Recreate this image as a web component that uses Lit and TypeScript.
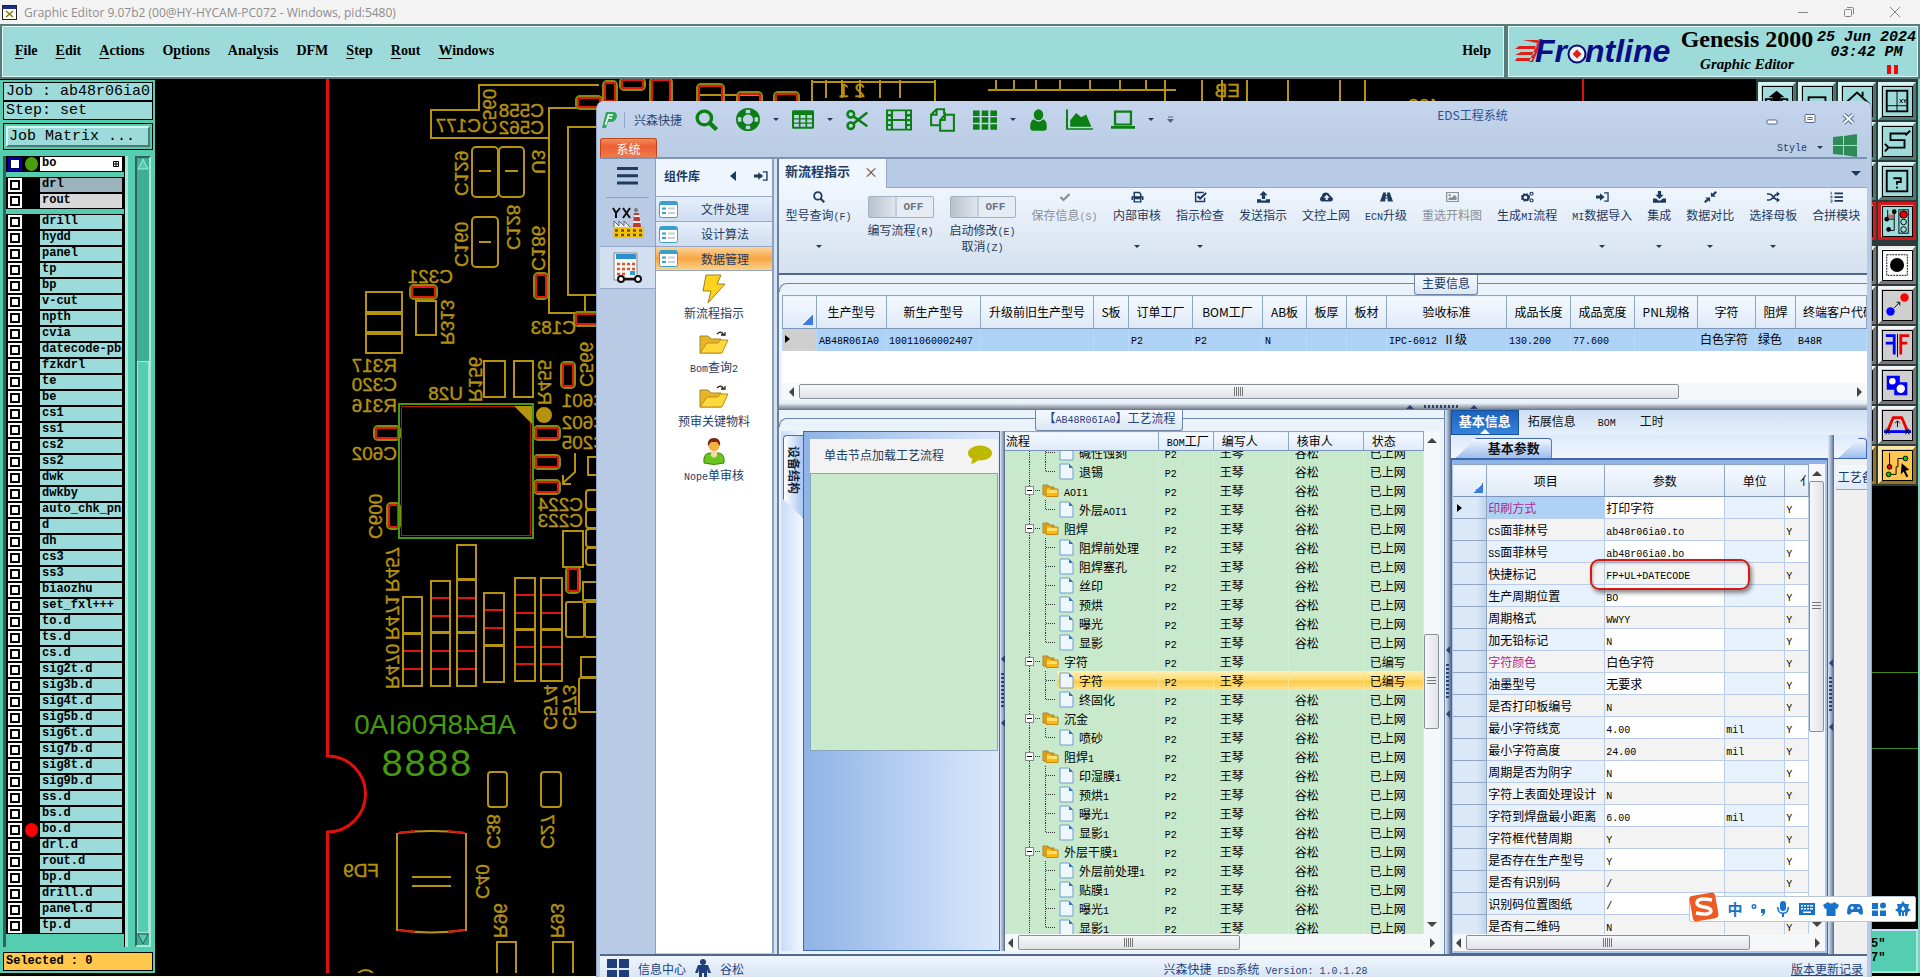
import { LitElement, html, svg, css, nothing } from "lit";
import { customElement } from "lit/decorators.js";
import { classMap } from "lit/directives/class-map.js";

/* Latin runs inside Chinese labels are set in a half-width monospace face. */
const mix = (s: string) =>
  s.split(/([\x20-\x7e]+)/).map((p) => (/^[\x20-\x7e]+$/.test(p) ? html`<span class="l">${p}</span>` : p));

const shared = css`
  * { box-sizing: border-box; }
  button { font: inherit; color: inherit; background: none; border: 0; padding: 0; margin: 0; cursor: default; }
  svg { display: block; flex: none; }
  .l { font-family: "Liberation Mono", monospace; font-size: 10px; line-height: 10px; white-space: pre; }
`;

/* ---------------------------------------------------------------- board */

const GOLD = "#b5930f";
const ht = (s: string, right: number, base: number) =>
  svg`<text transform="translate(${right} ${base}) scale(-1 1)">${s}</text>`;
const vt = (s: string, x: number, bottom: number) =>
  svg`<text transform="translate(${x} ${bottom}) scale(-1 1) rotate(-90)">${s}</text>`;
const rc = (x: number, y: number, x2: number, y2: number, r = 0) =>
  svg`<rect x=${x} y=${y} width=${x2 - x} height=${y2 - y} rx=${r}></rect>`;
const pill = (x: number, y: number, x2: number, y2: number) => svg`
  <rect x=${x} y=${y} width=${x2 - x} height=${y2 - y} rx="4" stroke="#8a8a10" stroke-width="2"></rect>
  <rect x=${x + 2} y=${y + 2} width=${x2 - x - 4} height=${y2 - y - 4} rx="2" stroke="#e01a10" stroke-width="2"></rect>`;

@customElement("pcb-board")
export class PcbBoard extends LitElement {
  static styles = [shared, css`
    :host { display: block; background: #000; overflow: hidden; }
    svg { width: 100%; height: 100%; }
    .silk { font: 19px "Liberation Sans", sans-serif; fill: #b5930f; stroke: #b5930f; stroke-width: .4px; }
    .part { font: 28px "Liberation Sans", sans-serif; fill: #459a0d; }
    .date { font: 38px "Liberation Mono", monospace; fill: #459a0d; }
  `];
  private bank(x: number, x2: number, tops: number[], reds: number[]) {
    return svg`${tops.slice(1).map((t, i) => rc(x, tops[i], x2, t - 1))}
      ${reds.map((r) => svg`<path d="M${x + 1} ${r}H${x2 - 1}" stroke="#d8180e" stroke-width="2"></path>`)}`;
  }
  render() {
    return html`<svg viewBox="155 79 1601 894" preserveAspectRatio="xMinYMin slice">
      <g fill="none" stroke="#e0100c" stroke-width="3">
        <path d="M327.500 79V756A38 38 0 0 1 327.500 832V973"></path>
        <path d="M1583 79V110" stroke-width="2"></path>
      </g>
      <g fill="none" stroke=${GOLD} stroke-width="2">
        <path d="M599 85H479V110H431V138H548M600 108H549V313H585M600 127H568V295H600M585 295V312M700 95H760M812 80V101M812 82H935M826 80V98M842 80V98M860 80V98M880 80V98M900 80V98M935 80V101M988 90H1176M996 80V90M1014 80V90M1036 80V90M1060 80V90M1090 80V90M1120 80V90M1146 80V90M1165 80V101M1202 80V101M1222 80V101M1247 80V101M1288 80V101M1340 80V101M1365 80V101"></path>
        ${rc(472, 147, 498, 197, 4)}${rc(499, 147, 524, 197, 4)}${rc(472, 217, 498, 267, 4)}
        <path d="M479 171H491M505 171H518M479 242H491"></path>
        ${rc(366, 292, 402, 312)}${rc(366, 314, 402, 332)}${rc(366, 334, 402, 353)}${rc(416, 301, 436, 335)}
        ${rc(484, 361, 505, 397)}${rc(514, 361, 533, 397)}
        <path d="M575 453V472L563 483M563 475V484H571"></path>
        ${this.bank(403, 422, [597, 634, 687], [651, 669])}
        ${this.bank(431, 450, [581, 633, 687], [598, 616, 651, 669])}
        ${this.bank(457, 476, [545, 580, 633, 687], [598, 616, 651, 669])}
        ${this.bank(484, 504, [593, 646, 683], [610, 628])}
        ${this.bank(515, 535, [578, 630, 682], [595, 613, 647, 664])}
        ${this.bank(541, 562, [578, 630, 682], [595, 613, 647, 664])}
        ${rc(563, 531, 583, 567)}${rc(566, 602, 584, 637, 2)}${rc(585, 602, 605, 637, 2)}${rc(583, 582, 605, 600)}
        ${rc(588, 457, 610, 475)}${rc(586, 490, 610, 509, 3)}${rc(586, 510, 610, 528, 3)}${rc(586, 529, 610, 547, 3)}${rc(586, 548, 610, 565, 3)}
        ${rc(581, 657, 605, 677)}${rc(579, 678, 605, 712, 2)}
        ${rc(488, 772, 507, 807, 3)}${rc(541, 772, 561, 807, 3)}
        <path d="M397 833V931M466 833V931M398 833Q431 829 465 833M398 930Q431 935 465 930M412 877H451M412 886H451"></path>
        <path d="M398 833L415 831M448 831L465 833M398 930L415 932M448 932L465 930" stroke="#d8180e"></path>
        ${rc(497, 942, 516, 985)}${rc(553, 942, 573, 985)}
        <path d="M358 973Q366 967 373 973"></path>
        ${pill(410, 285, 437, 299)}${pill(534, 273, 548, 299)}${pill(574, 312, 602, 326)}${pill(576, 96, 602, 109)}
        ${pill(603, 81, 617, 103)}${pill(620, 78, 645, 90)}${pill(650, 78, 672, 104)}${pill(697, 84, 724, 108)}${pill(737, 92, 762, 110)}${pill(774, 92, 799, 110)}
        ${pill(374, 426, 400, 440)}${pill(561, 362, 575, 388)}${pill(387, 503, 400, 529)}
        ${pill(534, 426, 560, 440)}${pill(534, 455, 560, 469)}${pill(534, 480, 560, 494)}${pill(566, 567, 580, 593)}
        <rect x="399" y="404" width="134" height="134" stroke="#459a0d"></rect>
        <rect x="401.500" y="406.500" width="129" height="129" stroke="#c01010" stroke-width="1"></rect>
      </g>
      <path d="M514 406H532V424Z" fill=${GOLD}></path><circle cx="544" cy="415" r="8" fill=${GOLD}></circle>
      <g class="silk">
        ${ht("C177", 481, 132)}${ht("C558", 544, 117)}${ht("C562", 544, 134)}${ht("C321", 453, 283)}${ht("C183", 576, 334)}
        ${ht("R317", 397, 372)}${ht("C320", 397, 391)}${ht("R316", 397, 412)}${ht("U28", 463, 400)}${ht("C602", 397, 460)}
        ${ht("C601", 607, 407)}${ht("C602", 607, 429)}${ht("C205", 607, 449)}${ht("C224", 583, 511)}${ht("C223", 583, 527)}${ht("FD9", 379, 877)}
        ${ht("2 1", 865, 97)}${ht("EB", 1240, 97)}
        ${ht("402", 1440, 112)}
        ${vt("C560", 483, 134)}${vt("C129", 455, 196)}${vt("U3", 532, 174)}${vt("C160", 455, 267)}${vt("C128", 507, 250)}${vt("C186", 532, 271)}
        ${vt("R313", 441, 345)}${vt("R156", 469, 402)}${vt("R455", 538, 405)}${vt("C566", 580, 387)}${vt("C600", 369, 539)}
        ${vt("R457", 386, 592)}${vt("R471", 386, 640)}${vt("R470", 386, 689)}${vt("C574", 544, 730)}${vt("C573", 563, 730)}
        ${vt("C38", 487, 849)}${vt("C27", 541, 849)}${vt("C40", 476, 899)}${vt("R96", 494, 938)}${vt("R93", 551, 938)}
      </g>
      <g class="part">${ht("AB48R06IA0", 516, 734)}</g>
      <g class="date">${ht("8888", 472, 776)}</g>
      <path d="M1756 671.500H1920M1756 747.500H1920" stroke="#3f8a10"></path>
    </svg>`;
  }
}

/* ---------------------------------------------------------------- icons */

const NAVY = "#1f3a5f";
const glyph: Record<string, unknown> = {
  search: svg`<circle cx="6.500" cy="6.500" r="5" fill="none" stroke="currentColor" stroke-width="2.400"></circle><path d="M10 10L15 15" stroke="currentColor" stroke-width="3"></path>`,
  ring: svg`<circle cx="8" cy="8" r="5.400" fill="none" stroke="currentColor" stroke-width="4"></circle><g fill="none" stroke="#bfd0e8" stroke-width="2.600"><path d="M6.500 2.300H9.500M6.500 13.700H9.500M2.300 6.500V9.500M13.700 6.500V9.500"></path></g><circle cx="8" cy="8" r="7.500" fill="none" stroke="currentColor"></circle>`,
  table: svg`<path fill-rule="evenodd" d="M1 1H15Q16 1 16 2V14Q16 15 15 15H1Q0 15 0 14V2Q0 1 1 1ZM1.500 4.500V7H5V4.500ZM6.200 4.500V7H9.800V4.500ZM11 4.500V7H14.500V4.500ZM1.500 8V10.300H5V8ZM6.200 8V10.300H9.800V8ZM11 8V10.300H14.500V8ZM1.500 11.300V13.600H5V11.300ZM6.200 11.300V13.600H9.800V11.300ZM11 11.300V13.600H14.500V11.300Z" fill="currentColor"></path>`,
  cut: svg`<g fill="none" stroke="currentColor" stroke-width="1.800"><circle cx="3.500" cy="3.800" r="2.400"></circle><circle cx="3.500" cy="12.200" r="2.400"></circle><path d="M5.500 5.500L15.500 12.500M5.500 10.500L15.500 2.500"></path></g>`,
  film: svg`<path fill-rule="evenodd" d="M0 1H16V15H0ZM1.200 2.200V4H3V2.200ZM1.200 5.600V7.400H3V5.600ZM1.200 8.800V10.600H3V8.800ZM1.200 12V13.800H3V12ZM13 2.200V4H14.800V2.200ZM13 5.600V7.400H14.800V5.600ZM13 8.800V10.600H14.800V8.800ZM13 12V13.800H14.800V12ZM4.300 2.200V7.300H11.700V2.200ZM4.300 8.700V13.800H11.700V8.700Z" fill="currentColor"></path>`,
  copy: svg`<g fill="none" stroke="currentColor" stroke-width="1.300"><path d="M6 11.500H.7V4.500L4.200.8H9V4M4.200.8V4.500H.7"></path><path d="M9.500 4.500H15.300V15.200H6.500V8L9.500 4.500V8H6.500"></path></g>`,
  grid: svg`<path d="M0 1H4.400V5H0ZM5.800 1H10.200V5H5.800ZM11.600 1H16V5H11.600ZM0 6H4.400V10H0ZM5.800 6H10.200V10H5.800ZM11.600 6H16V10H11.600ZM0 11H4.400V15H0ZM5.800 11H10.200V15H5.800ZM11.600 11H16V15H11.600Z" fill="currentColor"></path>`,
  user: svg`<circle cx="8" cy="4.200" r="4" fill="currentColor"></circle><path d="M4 7.500Q8 11 12 7.500Q15 8.500 15 13Q15 15.800 12.500 15.800H3.500Q1 15.800 1 13Q1 8.500 4 7.500Z" fill="currentColor"></path>`,
  chart: svg`<path d="M0 1H1.200V14H16V15.200H0Z" fill="currentColor"></path><path d="M2.500 13V8.500L6 3.500L9 6.500L12 4.500L15 13Z" fill="currentColor"></path>`,
  laptop: svg`<path d="M2.700 2.500H13.300V11.500H2.700Z" fill="none" stroke="currentColor" stroke-width="1.500"></path><path d="M0 12.500H16V14.500H0Z" fill="currentColor"></path>`,
  check: svg`<path d="M2 8L6 12L14 4" fill="none" stroke="currentColor" stroke-width="3"></path>`,
  print: svg`<path d="M4 7V2H10L12 4V7M1.500 12V8H14.500V12M4 10H12V14.500H4Z" fill="none" stroke="currentColor" stroke-width="1.800"></path>`,
  tick: svg`<path d="M12 2H2V14H13V9" fill="none" stroke="currentColor" stroke-width="1.800"></path><path d="M4.500 7L7.500 10L15 2.500" fill="none" stroke="currentColor" stroke-width="2.600"></path>`,
  upload: svg`<path d="M8 0L13 5.500H10V10.500H6V5.500H3ZM0 11H5V12.500H11V11H16V15.500H0Z" fill="currentColor"></path>`,
  download: svg`<path d="M6 0H10V5H13L8 10.500L3 5H6ZM0 10H4L6.500 12.500H9.500L12 10H16V15.500H0Z" fill="currentColor"></path>`,
  cloud: svg`<path fill-rule="evenodd" d="M4 14Q0 14 0 10.500Q0 8 2.200 7.200Q2.500 2 7.500 2Q11 2 12 5.500Q14 6 14 8Q16 8.500 16 11Q16 14 13 14ZM7 12H9.500V9H12L8.200 5L4.500 9H7Z" fill="currentColor"></path>`,
  road: svg`<path fill-rule="evenodd" d="M4 2H7.300L7 5H9L8.700 2H12L16 14H9.600L9.300 10H6.700L6.400 14H0ZM7 6.500L6.800 8.500H9.200L9 6.500Z" fill="currentColor"></path>`,
  image: svg`<path d="M.8 2H15.200V14H.8Z" fill="none" stroke="currentColor" stroke-width="1.500"></path><circle cx="4.500" cy="5.500" r="1.500" fill="currentColor"></circle><path d="M3 12V10L5.500 8L7 9L10.500 5L13 8V12Z" fill="currentColor"></path>`,
  gears: svg`<circle cx="5.500" cy="8.500" r="3.600" fill="none" stroke="currentColor" stroke-width="2.600"></circle><circle cx="5.500" cy="8.500" r="5" fill="none" stroke="currentColor" stroke-width="1.500" stroke-dasharray="2 2"></circle><circle cx="13" cy="3.500" r="1.900" fill="none" stroke="currentColor" stroke-width="1.400"></circle><circle cx="13" cy="12.500" r="1.900" fill="none" stroke="currentColor" stroke-width="1.400"></circle>`,
  signin: svg`<path d="M0 6H5V3L10.500 8L5 13V10H0Z" fill="currentColor"></path><path d="M10 2.500H14.800V13.500H10" fill="none" stroke="currentColor" stroke-width="1.600"></path>`,
  compress: svg`<path d="M8.500 1.500L10.500 3.500L14 0L16 2L12.500 5.500L14.500 7.500H8.500ZM7.500 14.500L5.500 12.500L2 16L0 14L3.500 10.500L1.500 8.500H7.500Z" fill="currentColor"></path>`,
  shuffle: svg`<path d="M0 4H3Q5 4 8 8T13 12M0 12H3Q5 12 8 8T13 4" fill="none" stroke="currentColor" stroke-width="2"></path><path d="M12 .8L16 4L12 7.200ZM12 8.800L16 12L12 15.200Z" fill="currentColor"></path>`,
  list: svg`<path d="M5.500 2H16V4.200H5.500ZM5.500 7H16V9.200H5.500ZM5.500 12H16V14.200H5.500Z" fill="currentColor"></path><path d="M1.500 1V5M.5 7H2.500V9H.5M.5 12H2.500V15H.5" fill="none" stroke="currentColor"></path>`,
};
const ico = (n: string, w: number, h = w) =>
  html`<svg width=${w} height=${h} viewBox="0 0 16 16" preserveAspectRatio="none">${glyph[n]}</svg>`;

const folderIcon = html`<svg width="17" height="15" viewBox="0 0 17 15"><path d="M1 2H6L7.500 4H12V12H1Z" fill="#d9a52a" stroke="#a9852c"></path><path d="M4 4H8L9.500 6H16V13.500H4Z" fill="#fdb813" stroke="#c38a12"></path><path d="M5 7H15V10H5Z" fill="#ffe067"></path></svg>`;
const fileIcon = html`<svg width="15" height="17" viewBox="0 0 15 17"><path d="M1 1H10L14 5V16H1Z" fill="#eef6ff" stroke="#6f9fce"></path><path d="M10 1L14 5H10Z" fill="#2c74c8"></path></svg>`;
const bigFolder = html`<svg width="30" height="24" viewBox="0 0 30 24"><path d="M1 5H9L12 8H22V22H1Z" fill="#e6b528" stroke="#a8851c"></path><path d="M1 22L8 12H19L21 9H29L23 22Z" fill="#ffd83c" stroke="#b8901a"></path><path d="M18 3Q22 -1 25 4M22 4H26V1" fill="none" stroke="#222" stroke-width="1.300"></path></svg>`;

/* ---------------------------------------------------------------- EDS window */

const mainCols: [string, number, string][] = [
  ["生产型号", 70, "AB48R06IA0"], ["新生产型号", 94, "10011060002407"], ["升级前旧生产型号", 113, ""], ["S板", 35, ""],
  ["订单工厂", 64, "P2"], ["BOM工厂", 70, "P2"], ["AB板", 44, "N"], ["板厚", 40, ""], ["板材", 40, ""],
  ["验收标准", 120, "IPC-6012 Ⅱ级"], ["成品长度", 64, "130.200"], ["成品宽度", 64, "77.600"], ["PNL规格", 63, ""],
  ["字符", 58, "白色字符"], ["阻焊", 40, "绿色"],
];

const tree: [string, boolean, string?][] = [
  ["碱性蚀刻", false], ["退锡", false], ["AOI1", true], ["外层AOI1", false], ["阻焊", true], ["阻焊前处理", false],
  ["阻焊塞孔", false], ["丝印", false], ["预烘", false], ["曝光", false], ["显影", false], ["字符", true, "已编写"],
  ["字符", false, "已编写"], ["终固化", false], ["沉金", true], ["喷砂", false], ["阻焊1", true], ["印湿膜1", false],
  ["预烘1", false], ["曝光1", false], ["显影1", false], ["外层干膜1", true], ["外层前处理1", false], ["贴膜1", false],
  ["曝光1", false], ["显影1", false],
];

const params: [string, string, string?][] = [
  ["印刷方式", "打印字符"], ["CS面菲林号", "ab48r06ia0.to"], ["SS面菲林号", "ab48r06ia0.bo"], ["快捷标记", "FP+UL+DATECODE"],
  ["生产周期位置", "BO"], ["周期格式", "WWYY"], ["加无铅标记", "N"], ["字符颜色", "白色字符"], ["油墨型号", "无要求"],
  ["是否打印板编号", "N"], ["最小字符线宽", "4.00", "mil"], ["最小字符高度", "24.00", "mil"], ["周期是否为阴字", "N"],
  ["字符上表面处理设计", "N"], ["字符到焊盘最小距离", "6.00", "mil"], ["字符框代替周期", "Y"], ["是否存在生产型号", "Y"],
  ["是否有识别码", "/"], ["识别码位置图纸", "/"], ["是否有二维码", "N"],
];

const ribbon: [string, string, boolean, string?][] = [
  ["print", "内部审核", true], ["tick", "指示检查", true], ["upload", "发送指示", false], ["cloud", "文控上网", false],
  ["road", "ECN升级", false], ["image", "重选开料图", false, "off"], ["gears", "生成MI流程", false], ["signin", "MI数据导入", true],
  ["download", "集成", true], ["compress", "数据对比", true], ["shuffle", "选择母板", true], ["list", "合拼模块", false],
];

@customElement("eds-window")
export class EdsWindow extends LitElement {
  static styles = [shared, css`
    :host { display: flex; flex-direction: column; font: 12px/16px "Noto Sans CJK SC", sans-serif; color: #1f3a5f;
      background: linear-gradient(#c4d4ec, #b9cbe4 60px, #b9cbe4); border-radius: 8px 8px 0 0; padding: 0 4px 0 3px;
      border-left: 1px solid #8fa5c4; border-right: 1px solid #8fa5c4; white-space: nowrap; overflow: hidden; }
    .title { display: flex; align-items: center; height: 37px; flex: none; padding-left: 1px; }
    .quick { display: flex; align-items: center; gap: 13px; color: #0a7f12; }
    .quick .name { color: #2c466e; border-left: 1px solid #91a6c6; padding-left: 9px; margin-left: -7px; }
    .quick .wide { margin-right: 5px; }
    .caret { border: 3px solid transparent; border-top: 3px solid #1f3a5f; border-bottom: 0; width: 6px; height: 3px; }
    .cap { flex: 1; text-align: center; padding: 0 0 10px 5px; color: #2d4f93; }
    .wb { display: flex; gap: 26px; padding: 0 12px 2px 0; align-items: center; }
    .sys { display: flex; height: 21px; flex: none; border-bottom: 2px solid #7d93b3; align-items: flex-end; justify-content: space-between; }
    .sys .tab { width: 57px; height: 19px; border-radius: 3px 3px 0 0; color: #fff; border: 1px solid #c14418; border-bottom: 0;
      background: linear-gradient(#f28d5a, #ec5f35 40%, #f07a4c); line-height: 17px; }
    .style { display: flex; align-items: center; gap: 10px; padding-right: 10px; height: 20px; }
    .style .l { padding-top: 4px; }
    .style svg { margin-top: -3px; }
    .body { display: flex; flex: 1; min-height: 0; }
    .nav { width: 56px; border-right: 1px solid #8ba1c2; display: flex; flex-direction: column; align-items: center; }
    .nav .menu { height: 39px; padding: 8px 0 0; width: 43px; border-bottom: 1px solid #8ba1c2; display: flex; justify-content: center; }
    .nav .item { height: 48px; width: 100%; display: grid; place-items: center; }
    .nav .on { height: 43px; background: #d2dff0; border: solid #93a8c6; border-width: 1px 0; }
    .lib { width: 118px; background: #fff; border-right: 2px solid #8ba1c2; display: flex; flex-direction: column; margin-bottom: 1px; }
    .lib header { height: 37px; background: #eef5fd; display: flex; align-items: center; padding: 0 4px 0 8px; font-weight: bold; flex: none; }
    .lib header span { flex: 1; padding-bottom: 3px; }
    .lib header svg { margin: 0 0 4px 18px; }
    .acc { height: 25px; border: 1px solid #93a8c6; border-width: 1px 0 0; display: flex; align-items: center; padding-left: 3px;
      background: linear-gradient(#e6f0fb, #cfddf0); }
    .acc span { flex: 1; text-align: center; }
    .acc.sel { background: linear-gradient(#fbd49a, #f8a545 50%, #fdd287); border-bottom-width: 1px; }
    .tools { display: flex; flex-direction: column; align-items: center; padding-top: 2px; }
    .tools button { height: 54px; display: flex; flex-direction: column; align-items: center; }
    .tools .pic { height: 32px; display: grid; place-items: center; }
    .gutter { width: 5px; border-right: 2px solid #6a7f9e; background: #d5e2f2; }
    .main { flex: 1; min-width: 0; display: flex; flex-direction: column; background: #e4eefa; }
    .docs { height: 29px; flex: none; display: flex; background: #b9cbe4; border-bottom: 1px solid #93a8c6; align-items: center; justify-content: space-between; padding-right: 6px; }
    .docs .tab { height: 29px; align-self: flex-start; background: #f0f6fd; border-right: 1px solid #93a8c6; display: flex; align-items: center; gap: 14px; padding: 0 8px 6px 6px; font-size: 13px; font-weight: bold; }
    .docs .x { font-weight: normal; font-size: 14px; color: #555; }
    .big { border-width: 5px; border-bottom-width: 0; width: 10px; height: 5px; border-top-width: 5px; }
    .ribbon { height: 87px; flex: none; display: flex; gap: 15px; padding: 3px 6px; background: linear-gradient(#eef5fd, #d5e1ef); border-bottom: 2px solid #53688a; align-items: flex-start; overflow: hidden; }
    .ribbon > * { display: flex; flex-direction: column; align-items: center; }
    .ribbon .w { width: 67px; }
    .ribbon svg { margin-bottom: 4px; }
    .ribbon .caret { margin-top: 22px; }
    .off { color: #8b8f96; }
    .sw { appearance: none; margin: 5px 0 0; width: 66px; height: 22px; border: 1px solid #a3b0c2; border-radius: 2px;
      background: linear-gradient(90deg, #b9c1ca, #dfe5ec 26px, #a3b0c2 27px, #e6ecf3 28px); }
    .swb { display: grid; }
    .swb > * { grid-area: 1 / 1; }
    .swb b { align-self: center; padding: 4px 0 0 36px; font: bold 11px "Liberation Mono", monospace; color: #687484; pointer-events: none; }
    .ribbon label { display: flex; flex-direction: column; align-items: center; gap: 4px; }
    .group { position: relative; background: #eaf3fc; padding: 20px 0 3px 3px; flex: none; height: 128px; display: flex; flex-direction: column; }
    .group::before { content: ""; position: absolute; inset: 8px 0 auto 0; height: 8px; border: solid #6f86a6; border-width: 1px 0 0 1px; border-radius: 8px 0 0 0; }
    .legend { position: absolute; top: 0; left: 50%; border: 1px solid #6f86a6; border-top: 0; border-radius: 0 0 3px 3px;
      background: linear-gradient(#f6faff, #dbe7f5); padding: 0 7px 4px; height: 20px; line-height: 15px; }
    .legend.a { margin-left: 91px; }
    .legend.b { margin-left: -76px; color: #26437e; height: 21px; line-height: 16px; }
    table { border-collapse: collapse; table-layout: fixed; width: 100%; color: #000; }
    th { font-weight: normal; border: 1px solid #8fa5c4; border-bottom-color: #7d95b8; background: linear-gradient(#f4f9ff, #dfeaf7); padding: 0; overflow: hidden; }
    td { padding: 0 0 0 2px; overflow: hidden; }
    .info { background: #fff; flex: 1; overflow: hidden; }
    .info th { height: 33px; border-top-color: #8fa5c4; }
    .info td { height: 22px; background: #aed2f6; border: 1px solid #b9d9f8; border-width: 0 1px; line-height: 16px; padding-bottom: 2px; }
    .info .last { text-align: left; padding-left: 7px; }
    td.rowh { background: #cfcfcf !important; }
    .corner::after { content: ""; display: block; margin: 15px 3px 0 auto; width: 10px; height: 10px; background: linear-gradient(135deg, transparent 50%, #3d7be0 50%); }
    .hs { height: 17px; flex: none; display: flex; align-items: center; background: #f6f7f9; gap: 5px; padding: 0 5px 0 7px; }
    .hs i, .vs i { background: linear-gradient(#f7f8fa, #dfe2e8); border: 1px solid #8b9098; border-radius: 2px; display: grid; place-items: center; }
    .hs i { height: 15px; }
    .hs i::after { content: ""; width: 9px; height: 9px; background: repeating-linear-gradient(90deg, #777 0 1px, transparent 1px 2px); }
    .low .hs { padding-left: 3px; }
    .vs { width: 16px; flex: none; display: flex; flex-direction: column; align-items: center; background: #f6f7f9; padding: 7px 0; }
    .vs i { width: 15px; background: linear-gradient(90deg, #f7f8fa, #dfe2e8); }
    .vs i::after { content: ""; width: 9px; height: 9px; background: repeating-linear-gradient(#777 0 1px, transparent 1px 3px); }
    .grow { flex: 1; }
    .ar { width: 0; height: 0; border: 5px solid transparent; flex: none; }
    .ar.lft { border-right-color: #444; border-left: 0; }
    .ar.rgt { border-left-color: #444; border-right: 0; }
    .ar.up { border-bottom-color: #444; border-top: 0; }
    .ar.dn { border-top-color: #444; border-bottom: 0; }
    .split { flex: none; height: 7px; background: linear-gradient(#f0f4f8, #b8bec8 40%, #66758a); display: flex; justify-content: center; align-items: center; gap: 10px; padding-left: 238px; }
    .split .dots { width: 36px; height: 3px; background: repeating-linear-gradient(90deg, #2b4370 0 2px, transparent 2px 4px); }
    .vsplit { flex: none; background: linear-gradient(90deg, #dfe8f4, #9fb0c8 50%, #54698c); display: flex; flex-direction: column; align-items: center; justify-content: center; gap: 10px; }
    .vsplit .dots { height: 36px; width: 3px; background: repeating-linear-gradient(#2b4370 0 2px, transparent 2px 4px); }
    .ar.s { border-width: 4px; }
    .ar.up.s { border-bottom-color: #2b4370; border-top: 0; }
    .ar.lft.s { border-right-color: #2b4370; border-left: 0; }
    .low { flex: 1; min-height: 0; display: grid; grid-template-columns: minmax(0, 8fr) 6px minmax(0, 5fr); grid-template-rows: minmax(0, 1fr); }
    .low .group { height: auto; min-height: 0; flex-direction: row; padding: 21px 4px 3px 2px; border-right: 1px solid #6f86a6; }
    .dev { width: 219px; display: flex; flex: none; }
    .dev .side { width: 22px; background: linear-gradient(90deg, #c9dcfa, #f2f7ff); padding: 4px 0 0 2px; }
    .dev .side button { width: 20px; height: 83px; writing-mode: vertical-rl; text-orientation: sideways; font-weight: bold; color: #16263f;
      background: linear-gradient(90deg, #fff, #a9c5f0); border: 1px solid #4a6ea8; border-right: 0; border-radius: 4px 0 0 0; padding: 10px 0 0; text-align: left;
      clip-path: polygon(0 0, 100% 0, 100% 100%, 0 77%); font-size: 12px; }
    .dev .pane { flex: 1; border: 1px solid #3e68ae; background: linear-gradient(90deg, #8fb3e6, #dbe8fc); padding: 7px 1px 0 6px; }
    .hint { height: 34px; background: #f3f3f3; display: flex; align-items: center; justify-content: space-between; padding: 0 6px 3px 14px; }
    .map { height: 278px; background: #c9e9cc; border: 1px solid #8aa6b8; }
    .flow { flex: 1; min-width: 0; display: flex; flex-direction: column; background: #f6f7f9; }
    .cols { display: flex; flex: 1; min-height: 0; }
    .view { flex: 1; min-width: 0; overflow: hidden; display: flex; flex-direction: column; }
    .tree th { height: 19px; text-align: left; padding-left: 8px; border-width: 1px 1px 1px 0; line-height: 16px; }
    .tree th:first-child { padding-left: 1px; }
    .rows { background: #c9e9cc; overflow: hidden; flex: 1; min-height: 0; }
    .rows table { margin-top: -8px; }
    .rows td { height: 19px; padding: 0 0 0 6px; border-right: 1px solid #d5ecd6; line-height: 17px; }
    .rows td:first-child { padding: 0; }
    .node { display: flex; align-items: center; height: 19px; }
    .node > span { padding-left: 5px; }
    .pick td { background: linear-gradient(#fff0b8, #fddc72 45%, #fbcb45 55%, #fee49a); border-color: #fbe29a; }
    .pick td:first-child { background: linear-gradient(90deg, #c9e9cc 52px, transparent 52px), linear-gradient(#fff0b8, #fddc72 45%, #fbcb45 55%, #fee49a); }
    .right { display: flex; flex-direction: column; min-width: 0; min-height: 0; overflow: hidden; }
    .tabs { height: 25px; flex: none; display: flex; background: linear-gradient(#cfe0f4, #e6f0fb); color: #111; gap: 1px; }
    .tabs button { padding: 0 8px 4px; position: relative; min-width: 44px; }
    .tabs .on { background: linear-gradient(#1c62bd, #3583dc); color: #fff; font: bold 13px/16px "Noto Sans CJK SC", sans-serif; border: 1px solid #174f9c; padding: 0 7px 4px; }
    .tabs .on::after { content: ""; position: absolute; left: 28px; bottom: 0; border: 5px solid transparent; border-bottom: 5px solid #fff; border-top: 0; }
    .halves { flex: 1; display: flex; min-height: 0; }
    .half { width: 377px; flex: none; display: flex; flex-direction: column; min-height: 0; }
    .half.rest { width: auto; flex: 1; min-width: 0; background: #f0f0f0; overflow: hidden; }
    .sub { height: 24px; flex: none; background: linear-gradient(#dce9fc, #f2f7ff); border-bottom: 1px solid #3e68ae; display: flex; align-items: flex-end; padding-left: 5px; }
    .sub button { height: 20px; width: 96px; background: linear-gradient(#f2f7ff, #9dbdec); font: bold 13px/18px "Noto Sans CJK SC", sans-serif; color: #111; padding: 0 0 2px 20px; clip-path: polygon(20px 0, 100% 0, 100% 100%, 0 100%);
      border: 1px solid #3e68ae; border-bottom: 0; border-radius: 0 4px 0 0; }
    .frame { flex: 1; min-height: 0; border: 3px solid #a9c5ee; border-top: 5px solid #8fb3e6; border-left-width: 2px; display: flex; flex-direction: column; background: #f6f7f9; outline: 1px solid #3e68ae; outline-offset: -1px; }
    .par th { height: 32px; border-width: 1px 1px 1px 0; }
    .par td { height: 22px; border: 1px solid #b9cdea; border-width: 0 1px 1px 0; background: #fff; line-height: 16px; padding-left: 1px; }
    .par tr:nth-child(even) td { background: #f3f3f3; }
    .par tr td.rh, .par tr:nth-child(even) td.rh { background: linear-gradient(90deg, #dbe8f7 70%, #c2d4ea); border-color: #8fa5c4; padding-left: 4px; }
    .par tr:nth-child(odd) td.k { background: #e8f2fd; }
    .par tr:nth-child(1) td.sel { background: #aed2f6; }
    .par .mag { color: #b3278f; }
    .note { height: 25px; flex: none; background: linear-gradient(#f4f9ff, #dfeaf7); border-bottom: 1px solid #8fa5c4; margin: 6px 0 0 2px; padding: 4px 2px; overflow: hidden; }
    .status { height: 23px; flex: none; border-top: 2px solid #53688a; background: linear-gradient(#eef5fd, #d9e6f4); display: flex; align-items: center; color: #26437e; overflow: hidden; }
    .status .l1 { display: flex; gap: 9px; align-items: center; padding: 4px 0 0 7px; }
    .status .mid { padding-top: 4px; flex: 1; text-align: center; }
    .status .r { padding: 4px 4px 0; }
    .status a { color: inherit; }
  `];

  private hscroll(w: string) {
    return html`<div class="hs"><span class="ar lft"></span><i style="width:${w}"></i><span class="grow"></span><span class="ar rgt"></span></div>`;
  }
  private branch(folder: boolean, last: boolean) {
    const dots = (d: string) => svg`<path d=${d} stroke="#333" stroke-dasharray="1 1"></path>`;
    return folder
      ? html`<svg width="37" height="19">${dots("M24.500 0V19M30 9.500H35")}<rect x="20.500" y="5.500" width="8" height="8" fill="#fff" stroke="#888"></rect><path d="M22 9.500H27" stroke="#000"></path></svg>${folderIcon}`
      : html`<svg width="54" height="19">${dots("M24.500 0V19")}${dots(last ? "M40.500 0V10" : "M40.500 0V19")}${dots("M41 9.500H51")}</svg>${fileIcon}`;
  }

  render() {
    const q = (n: string, w: number, h: number, wide = true) =>
      html`<button class=${classMap({ wide })} aria-label=${n}>${ico(n, w, h)}</button>`;
    const caret = html`<span class="caret"></span>`;
    return html`
      <div class="title">
        <div class="quick">
          <svg width="17" height="18" viewBox="0 0 17 18"><path d="M5 1H13Q17 2 15.500 7Q14 11 10 11H7L5 17H1Z" fill="#2fa65c"></path><path d="M7 4H12M6.500 7H11M7.500 4L4.500 14" stroke="#fff" stroke-width="1.600"></path></svg>
          <span class="name">兴森快捷</span>
          ${q("search", 23, 22)}${q("ring", 24, 23, false)}${caret}${q("table", 22, 21, false)}${caret}${q("cut", 22, 22)}${q("film", 26, 24)}
          ${q("copy", 25, 24)}${q("grid", 24, 22, false)}${caret}${q("user", 19, 22)}${q("chart", 27, 23)}${q("laptop", 24, 23, false)}${caret}
          <svg width="7" height="8" viewBox="0 0 7 8"><path d="M1 1H6" stroke="#567"></path><path d="M0 3H7L3.500 7Z" fill="#567"></path></svg>
        </div>
        <div class="cap">EDS工程系统</div>
        <div class="wb">
          <button aria-label="最小化"><svg width="12" height="12"><rect x="1" y="7" width="10" height="4" rx="1" fill="#fff" stroke="#53688a"></rect></svg></button>
          <button aria-label="最大化"><svg width="12" height="12"><rect x="1" y="1.500" width="10" height="8" rx="1" fill="#fff" stroke="#53688a"></rect><rect x="4" y="4.500" width="4" height="2" fill="none" stroke="#53688a"></rect></svg></button>
          <button aria-label="关闭"><svg width="13" height="12"><path d="M2 1.500L11 10M11 1.500L2 10" stroke="#53688a" stroke-width="4"></path><path d="M2 1.500L11 10M11 1.500L2 10" stroke="#fff" stroke-width="2"></path></svg></button>
        </div>
      </div>
      <div class="sys">
        <button class="tab">系统</button>
        <div class="style"><span class="l">Style</span>${caret}
          <svg width="24" height="23" viewBox="0 0 24 23"><path d="M0 3L10 2V11H0ZM11 2L24 0V11H11ZM0 12H10V21L0 20ZM11 12H24V23L11 21Z" fill="#2e8b57"></path></svg></div>
      </div>
      <div class="body">
        <nav class="nav">
          <button class="menu" aria-label="菜单"><svg width="21" height="18"><path d="M0 1.500H21M0 8.800H21M0 16H21" stroke=${NAVY} stroke-width="3"></path></svg></button>
          <button class="item" aria-label="工厂"><svg width="32" height="31" viewBox="0 0 32 31"><path d="M1 1L4 6V11M8 1L4 6M11 1L18 11M18 1L11 11" fill="none" stroke="#111" stroke-width="2"></path><path d="M21 20L22 6H27L29 20Z" fill="#c0392b"></path><path d="M22 9H28M21 15H29" stroke="#eee" stroke-width="2"></path><circle cx="24" cy="3" r="2" fill="#777"></circle><path d="M2 20V14L7 19V14L12 19V14L18 20" fill="#f4f4f4" stroke="#666"></path><path d="M1 20H32V31H1Z" fill="#f3c50a"></path><path d="M3 23.500H31M3 28H31" stroke="#6b5200" stroke-width="2.500" stroke-dasharray="3 3"></path></svg></button>
          <button class="item on" aria-label="日历"><svg width="30" height="32" viewBox="0 0 30 32"><path d="M1 1H24V28H1Z" fill="#f7f7f7" stroke="#888"></path><path d="M3 2H23V7H3Z" fill="#2a8fd0"></path><path d="M4 12H22M4 17H22M4 22H14" stroke="#e0552c" stroke-width="2.500" stroke-dasharray="3 2"></path><path d="M17 19H22V23H17Z" fill="#2aa0d8"></path><circle cx="8" cy="27" r="3" fill="#fff" stroke="#111" stroke-width="2"></circle><circle cx="25" cy="27" r="3" fill="#fff" stroke="#111" stroke-width="2"></circle><path d="M11 27H22" stroke="#111" stroke-width="2.500"></path></svg></button>
        </nav>
        <aside class="lib">
          <header><span>组件库</span><svg width="6" height="10"><path d="M6 0V10L0 5Z" fill=${NAVY}></path></svg>${ico("signin", 14, 12)}</header>
          ${["文件处理", "设计算法", "数据管理"].map((n, i) => html`<button class=${classMap({ acc: true, sel: i === 2 })}>
            <svg width="19" height="17" viewBox="0 0 19 17"><rect x=".5" y=".5" width="18" height="16" rx="2" fill="#fff" stroke="#3ba0c8"></rect><path d="M1 2.500H18" stroke="#3ba0c8" stroke-width="3"></path><path d="M3 7.500H7M3 12H7" stroke="#3ba0c8" stroke-width="2"></path><path d="M9 7.500H16M9 12H16" stroke="#ccd" stroke-width="2"></path></svg><span>${n}</span></button>`)}
          <div class="tools">
            <button><span class="pic"><svg width="24" height="30" viewBox="0 0 24 30"><path d="M4 1H19L15 10H23L6 29L9 17H1Z" fill="#ffd21c" stroke="#9a8020"></path></svg></span><span>新流程指示</span></button>
            <button><span class="pic">${bigFolder}</span><span>${mix("Bom")}查询${mix("2")}</span></button>
            <button><span class="pic">${bigFolder}</span><span>预审关键物料</span></button>
            <button><span class="pic"><svg width="22" height="28" viewBox="0 0 22 28"><path d="M1 26Q0 17 6 16H16Q22 17 21 26Q11 29 1 26Z" fill="#6cc51e" stroke="#3c8a10"></path><path d="M8 14H14V19L11 21L8 19Z" fill="#f5d9a8"></path><circle cx="11" cy="8.500" r="5.500" fill="#f2b040"></circle><path d="M5 9Q4 1 11 1T17 9L14 5H8Z" fill="#7a2410"></path></svg></span><span>${mix("Nope单审核")}</span></button>
          </div>
        </aside>
        <div class="gutter"></div>
        <section class="main">
          <div class="docs"><button class="tab">新流程指示<span class="x">×</span></button><span class="caret big"></span></div>
          <div class="ribbon">
            <button class="w">${ico("search", 12)}<span>${mix("型号查询(F)")}</span>${caret}</button>
            <div class="w"><label><span class="swb"><input class="sw" type="checkbox" /><b>OFF</b></span><span>${mix("编写流程(R)")}</span></label></div>
            <div class="w"><label><span class="swb"><input class="sw" type="checkbox" /><b>OFF</b></span><span>${mix("启动修改(E)")}</span></label><span>${mix("取消(Z)")}</span></div>
            <button class="w off">${ico("check", 12)}<span>${mix("保存信息(S)")}</span></button>
            ${ribbon.map(([i, n, c, o]) => html`<button class=${o ?? ""}>${ico(i, 13, 12)}<span>${mix(n)}</span>${c ? caret : nothing}</button>`)}
          </div>
          <div class="group">
            <div class="legend a">主要信息</div>
            <div class="info"><table>
              <colgroup><col style="width:34px" />${mainCols.map((c) => html`<col style="width:${c[1]}px" />`)}<col /></colgroup>
              <thead><tr><th class="corner"></th>${mainCols.map((c) => html`<th>${c[0]}</th>`)}<th class="last">终端客户代码</th></tr></thead>
              <tbody><tr><td class="rowh"><svg width="5" height="8"><path d="M0 0L5 4L0 8Z"></path></svg></td>${mainCols.map((c) => html`<td>${mix(c[2])}</td>`)}<td>${mix("B48R")}</td></tr></tbody>
            </table></div>
            ${this.hscroll("82%")}
          </div>
          <div class="split"><span class="ar up s"></span><span class="dots"></span><span class="ar up s"></span></div>
          <div class="low">
            <div class="group">
              <div class="legend b">${mix("【AB48R06IA0】工艺流程")}</div>
              <div class="dev">
                <div class="side"><button>设备结构</button></div>
                <div class="pane">
                  <div class="hint">单击节点加载工艺流程<svg width="24" height="20" viewBox="0 0 24 20"><ellipse cx="12" cy="8" rx="12" ry="7.500" fill="#bdb900"></ellipse><path d="M5 12L3 19Q8 18 11 14Z" fill="#bdb900"></path></svg></div>
                  <div class="map"></div>
                </div>
              </div>
              <div class="vsplit" style="width:5px"><span class="ar lft s"></span><span class="dots"></span><span class="ar lft s"></span></div>
              <div class="flow">
                <div class="cols">
                  <div class="view">
                    <table class="tree"><colgroup><col /><col style="width:55px" /><col style="width:75px" /><col style="width:75px" /><col style="width:60px" /></colgroup>
                      <thead><tr><th>流程</th><th>${mix("BOM工厂")}</th><th>编写人</th><th>核审人</th><th>状态</th></tr></thead></table>
                    <div class="rows"><table><colgroup><col /><col style="width:55px" /><col style="width:75px" /><col style="width:75px" /><col style="width:60px" /></colgroup>
                      <tbody>${tree.map(([n, f, s], i) => html`<tr class=${i === 12 ? "pick" : ""}>
                        <td><div class="node">${this.branch(f, i === tree.length - 1 || !!tree[i + 1]?.[1])}<span>${mix(n)}</span></div></td>
                        <td>${mix("P2")}</td><td>王琴</td><td>${s ? "" : "谷松"}</td><td>${s ?? "已上网"}</td></tr>`)}</tbody></table></div>
                  </div>
                  <div class="vs"><span class="ar up"></span><span style="flex:189"></span><i style="flex:93"></i><span style="flex:191"></span><span class="ar dn"></span></div>
                </div>
                ${this.hscroll("52%")}
              </div>
            </div>
            <div class="vsplit"><span class="ar lft s"></span><span class="dots"></span><span class="ar lft s"></span></div>
            <div class="right">
              <div class="tabs"><button class="on">基本信息</button><button>拓展信息</button><button>${mix("BOM")}</button><button>工时</button></div>
              <div class="halves">
                <div class="half">
                  <div class="sub"><button>基本参数</button></div>
                  <div class="frame">
                    <div class="cols">
                      <div class="view"><table class="par"><colgroup><col style="width:34px" /><col style="width:118px" /><col style="width:120px" /><col style="width:60px" /><col /></colgroup>
                        <thead><tr><th class="corner"></th><th>项目</th><th>参数</th><th>单位</th><th>　 亻</th></tr></thead>
                        <tbody>${params.map(([k, v, u], i) => html`<tr>
                          <td class="rh">${i ? nothing : html`<svg width="5" height="8"><path d="M0 0L5 4L0 8Z"></path></svg>`}</td>
                          <td class=${classMap({ k: true, sel: i === 0, mag: i === 0 || i === 7 })}>${mix(k)}</td>
                          <td>${mix(v)}</td><td class="k">${mix(u ?? "")}</td><td>${mix("Y")}</td></tr>`)}</tbody></table></div>
                      <div class="vs"><span class="ar up"></span><span style="flex:5"></span><i style="flex:250"></i><span style="flex:190"></span><span class="ar dn"></span></div>
                    </div>
                    ${this.hscroll("78%")}
                  </div>
                </div>
                <div class="vsplit" style="width:6px"><span class="ar lft s"></span><span class="dots"></span><span class="ar lft s"></span></div>
                <div class="half rest"><div class="sub"><button></button></div><div class="note">工艺备注</div></div>
              </div>
            </div>
          </div>
        </section>
      </div>
      <footer class="status">
        <div class="l1"><svg width="22" height="20"><path d="M0 0H10V9H0ZM12 0H22V9H12ZM0 11H10V20H0ZM12 11H22V20H12Z" fill="#1f3f7c"></path></svg>信息中心
          <svg width="16" height="20" viewBox="0 0 16 20"><circle cx="8" cy="3" r="3" fill="#1f3f7c"></circle><path d="M3 6H13L16 14H13L12 10V20H9V14H7V20H4V10L3 14H0Z" fill="#1f3f7c"></path></svg>谷松</div>
        <div class="mid">${mix("兴森快捷 EDS系统 Version: 1.0.1.28")}</div>
        <div class="r"><a href="#">版本更新记录</a></div>
      </footer>`;
  }
}

/* ---------------------------------------------------------------- shell */

const menus: [string, number][] = [["File", 0], ["Edit", 0], ["Actions", 0], ["Options", 1], ["Analysis", 4], ["DFM", -1], ["Step", 0], ["Rout", 0], ["Windows", 0]];
const layers = ("drill hydd panel tp bp v-cut npth cvia datecode-pbc fzkdrl te be cs1 ss1 cs2 ss2 dwk dwkby auto_chk_pnl d dh cs3 ss3 biaozhu set_fxl+++ " +
  "to.d ts.d cs.d sig2t.d sig3b.d sig4t.d sig5b.d sig6t.d sig7b.d sig8t.d sig9b.d ss.d bs.d bo.d drl.d rout.d bp.d drill.d panel.d tp.d").split(" ");

const toolPics: Record<number, unknown> = {
  0: svg`<path d="M3 24V13H9V17H20V13H26V24" fill="none" stroke="#000" stroke-width="2"></path><path d="M10 16V11H6L14.500 4L23 11H19V16Z"></path>`,
  1: svg`<rect x="6" y="11" width="18" height="14" fill="none" stroke="#000" stroke-width="2"></rect>`,
  2: svg`<path d="M3 17H27L15 6Z M21 5V10" fill="none" stroke="#000" stroke-width="2"></path>`,
  3: svg`<rect x="4" y="4" width="22" height="22" fill="none" stroke="#000" stroke-width="2"></rect><path d="M15 4V26M4 20H26" stroke="#000"></path><path d="M18 13L21 17M21 13L18 17M22 13L23.500 15L25 13M23.500 15V17" fill="none" stroke="#000"></path>`,
  7: svg`<path d="M26 7H8V14H23V22H4M24 9L29 4M2 18L6 22L2 26" fill="none" stroke="#000" stroke-width="2"></path>`,
  11: svg`<rect x="4" y="4" width="22" height="22" fill="none" stroke="#000" stroke-width="2"></rect><path d="M11 12H19V16H15V19" fill="none" stroke="#000" stroke-width="2"></path><rect x="14" y="21" width="2" height="2"></rect>`,
  15: svg`<path d="M5 3V13M12 5V25H5M6 13H12" fill="none" stroke="#000"></path><path d="M6 10H12" stroke="#e00" stroke-width="4" stroke-dasharray="1 1"></path><circle cx="4" cy="13" r="2.500"></circle><circle cx="12" cy="5" r="2.500"></circle><circle cx="6" cy="24" r="2.500"></circle><rect x="17" y="3" width="10" height="25" fill="none" stroke="#000"></rect><circle cx="22" cy="8" r="4" fill="#e00" stroke="#000"></circle><circle cx="22" cy="16" r="3" fill="none" stroke="#000"></circle><circle cx="22" cy="24" r="3" fill="none" stroke="#000"></circle>`,
  19: svg`<rect x="4" y="4" width="22" height="22" fill="none" stroke="#000" stroke-dasharray="2 1"></rect><circle cx="15" cy="15" r="7.500"></circle>`,
  23: svg`<circle cx="8" cy="22" r="4.500" fill="#00f"></circle><circle cx="23" cy="7" r="4.500" fill="#f00"></circle><path d="M12 18L18 12M14.500 12H18V15.500" fill="none" stroke="#000"></path>`,
  27: svg`<path d="M3 5H12V25M3 13H12" fill="none" stroke="#00f" stroke-width="3"></path><path d="M28 5H19V25M19 13H26" fill="none" stroke="#e00" stroke-width="3"></path><path d="M15.500 3V28" stroke="#000"></path>`,
  31: svg`<path d="M4 5H18V12H26V26H12V20H4Z" fill="#00f"></path><circle cx="10" cy="11" r="3.500" fill="#fff"></circle><circle cx="19" cy="19" r="4.500" fill="#fff"></circle>`,
  35: svg`<path d="M5 21L11 7H20L26 21" fill="none" stroke="#e00" stroke-width="3"></path><path d="M1 22H30" stroke="#00f" stroke-width="3"></path><path d="M15.500 17V11M13 13L15.500 10.500L18 13M3 19L7 25M7 19L3 25M24 19L28 25M28 19L24 25" fill="none" stroke="#000"></path>`,
  39: svg`<path d="M7 2V17M8 25H14V17H16V8H24" fill="none" stroke="#000"></path><circle cx="7" cy="17" r="2.500" fill="#e00" stroke="#000"></circle><circle cx="6" cy="25" r="2.500" fill="#0c0" stroke="#000"></circle><circle cx="24" cy="8" r="2.500" fill="#0c0" stroke="#000"></circle><path d="M20 13L28 20L24 21L27 27L25 28L22 22L19 25Z"></path>`,
};

@customElement("app-root")
export class AppRoot extends LitElement {
  static styles = [shared, css`
    :host { display: flex; flex-direction: column; height: 100vh; position: relative; overflow: hidden; background: #000; color: #000; }
    .os { height: 24px; flex: none; background: #f3f3f3; display: flex; align-items: center; gap: 7px; padding: 0 18px 0 2px; font: 12px "Noto Sans", "Open Sans", sans-serif; color: #8d8d8d; }
    .os span { flex: 1; font-family: "Open Sans", sans-serif; font-size: 12px; }
    .os button { width: 13px; margin-left: 26px; }
    .bar { height: 55px; flex: none; display: flex; font-family: "Liberation Serif", serif; background: #4a6e6e; }
    .box { background: #9cdbda; border: 2px solid #567c7c; outline: 1px solid #dff7f5; outline-offset: -3px; display: flex; }
    .menu { flex: 1; align-items: center; gap: 18px; padding: 0 13px 1px; font: bold 14px/18px "Liberation Serif", serif; }
    .menu u { text-underline-offset: 3px; }
    .menu .help { margin-left: auto; }
    .brand { width: 414px; align-items: center; padding-left: 7px; justify-content: space-between; }
    .gen { text-align: center; font: bold 24px/25px "Liberation Serif", serif; }
    .gen i { display: block; font-size: 15px; }
    .date { font: italic bold 15px/15px "Liberation Mono", monospace; text-align: center; padding-right: 2px; }
    .pause { display: flex; gap: 3px; justify-content: flex-end; padding: 5px 18px 0 0; }
    .pause b { width: 4px; height: 9px; background: #f00; }
    .work { flex: 1; min-height: 0; display: flex; }
    .left { width: 155px; flex: none; background: #54cdb0; padding: 2px 2px 0 3px; display: flex; flex-direction: column; font: bold 12px/14px "Liberation Mono", monospace; border-top: 1px solid #000; white-space: pre; }
    .field { height: 19px; flex: none; border: 1px solid #000; background: #9cdbda; font: 15px/17px "Liberation Mono", monospace; padding-left: 2px; }
    .jm { height: 27px; margin: 3px 0 6px; border: 1px solid #000; padding: 2px; flex: none; display: flex; }
    .jm button { flex: 1; text-align: left; background: #9cdbda; border: 2px solid; border-color: #d5f5f2 #4a7a76 #4a7a76 #d5f5f2; font: 15px/17px "Liberation Mono", monospace; padding-left: 1px; }
    .list { flex: 1; min-height: 0; display: flex; border-left: 3px solid #2f6355; }
    .names { width: 119px; display: flex; flex-direction: column; gap: 5px; border-right: 1px solid #000; }
    .blk { background: #000; padding: 0 2px; }
    .row { display: grid; grid-template-columns: 14px 16px 1fr; column-gap: 1px; height: 16px; align-items: center; }
    .row input { appearance: none; margin: 0; width: 14px; height: 14px; border: 2px solid #fff; background: #fff; box-shadow: inset 0 0 0 2px #000; }
    .row .nm { background: #9cdbda; height: 14px; overflow: hidden; padding-left: 2px; line-height: 13px; display: flex; justify-content: space-between; }
    .dot { width: 13px; height: 14px; border-radius: 50%; justify-self: center; }
    .row .dk { background: #9cb3be; } .row .lt { background: #d8d8d8; } .row .wh { background: #fff; padding-right: 3px; }
    .row input.cur { border-color: #00a; box-shadow: inset 0 0 0 1px #005; }
    .rail { flex: 1; display: flex; justify-content: flex-end; border-left: 3px solid #a5ead8; padding-right: 2px; }
    .sb { width: 16px; background: #3fae93; border: 2px solid; border-color: #2f6355 #a5ead8 #a5ead8 #2f6355; display: flex; flex-direction: column; align-items: center; }
    .sb i { flex: 573; width: 12px; background: #54cdb0; border: 1px solid #a5ead8; }
    .sel { margin: 5px 0 2px; height: 19px; flex: none; border: 1px solid #000; background: #ffc84c; line-height: 17px; padding-left: 2px; }
    pcb-board { flex: 1; min-width: 0; }
    .side { width: 164px; flex: none; display: flex; flex-direction: column; border-right: 2px solid #7fd0bc; }
    .pads { display: grid; grid-template-columns: repeat(4, 38px); gap: 2px; padding: 3px 2px 2px; background: #2b3a3a; }
    .pad { height: 38px; background: #9cdbda; border: 3px solid; border-color: #d5f5f2 #4a7a76 #4a7a76 #d5f5f2; display: grid; place-items: center; }
    .pad svg { border: 1px solid #000; }
    .pad.g { background: #cfcfcf; border-color: #f5f5f5 #777 #777 #f5f5f5; }
    .pad.w { background: #fff; border-color: #eee #777 #777 #eee; margin-top: 4px; }
    .pad.y { background: #fcc650; border-color: #ffe6a8 #9a7420 #9a7420 #ffe6a8; }
    .pad.r { border-color: #d81818; }
    .void { flex: 1; background: linear-gradient(#3f8a10, #3f8a10) 0 186px / 100% 1px no-repeat, linear-gradient(#3f8a10, #3f8a10) 0 262px / 100% 1px no-repeat, #000; }
    .coord { height: 44px; background: #54cdb0; border: 2px solid #a5ead8; border-top-color: #cdf; padding: 6px 0 0 113px; font: bold 12px/14px "Liberation Mono", monospace; }
    .foot { height: 4px; flex: none; background: linear-gradient(#000 3px, #fdfdd8 3px); }
    eds-window { position: absolute; left: 596px; right: 48px; top: 101px; bottom: 0; }
    .mark { position: absolute; left: 1590px; top: 559px; width: 160px; height: 31px; border: 2px solid #d81812; border-radius: 9px; box-shadow: 2px 3px 4px rgba(0, 0, 0, .45), inset 1px 2px 3px rgba(0, 0, 0, .25); pointer-events: none; }
    .ime { position: absolute; right: 4px; top: 896px; height: 26px; background: #fff; border: 1px solid #b8c6d8; border-radius: 2px; display: flex; align-items: center; gap: 8px; padding: 0 4px 0 37px; color: #1673c9; font: bold 15px/16px "Noto Sans CJK SC", sans-serif; }
    .ime > button { width: 16px; height: 16px; display: grid; place-items: center; }
    .ime > .s { position: absolute; left: -2px; top: -6px; width: 32px; height: 32px; }
  `];

  private row(n: string, cls = "", dot = "") {
    return html`<label class="row"><input type="checkbox" class=${cls === "wh" ? "cur" : ""} />
      <span class="dot" style="background:${dot || "transparent"}"></span><span class="nm ${cls}">${n}${cls === "wh" ? html`<svg width="6" height="13"><path d="M.500 4.500H5.500V9.500H.500ZM3 4V10M0 7H6" fill="none" stroke="#000"></path></svg>` : nothing}</span></label>`;
  }

  render() {
    const f = (d: string) => html`<svg width="16" height="16" viewBox="0 0 16 16"><path fill-rule="evenodd" d=${d} fill="#1673c9"></path></svg>`;
    return html`
      <div class="os">
        <svg width="15" height="15"><rect x=".5" y=".5" width="14" height="14" fill="#fff" stroke="#222"></rect><path d="M1 2.500H14" stroke="#1a2d8a" stroke-width="3"></path><path d="M4 6L11 12M11 6L4 12" stroke="#8a7a00" stroke-width="1.500"></path></svg>
        <span>Graphic Editor 9.07b2 (00@HY-HYCAM-PC072 - Windows, pid:5480)</span>
        <button aria-label="Minimize"><svg width="12" height="12"><path d="M1 6.500H11" stroke="#888"></path></svg></button>
        <button aria-label="Restore"><svg width="12" height="12"><rect x="1.500" y="3.500" width="7" height="7" rx="1" fill="none" stroke="#888"></rect><path d="M4 1.500H9Q10.500 1.500 10.500 3V8" fill="none" stroke="#888"></path></svg></button>
        <button aria-label="Close"><svg width="12" height="12"><path d="M1 1L11 11M11 1L1 11" stroke="#888"></path></svg></button>
      </div>
      <div class="bar">
        <div class="box menu">
          ${menus.map(([m, k]) => html`<button>${k < 0 ? m : html`${m.slice(0, k)}<u>${m[k]}</u>${m.slice(k + 1)}`}</button>`)}
          <button class="help">Help</button>
        </div>
        <div class="box brand">
          <svg width="162" height="30" viewBox="0 0 162 30">
            <path d="M8 3H24L22 6ZM4 9H22L20 12H0ZM6 15H20L18 18H0ZM2 21H18L16 24H0ZM24 2L14 25H18L28 2Z" fill="#e02018"></path>
            <text x="20" y="25" font-family="Liberation Sans" font-weight="bold" font-style="italic" font-size="32" fill="#0c0c84">Fr</text>
            <circle cx="62" cy="17" r="8.500" fill="#e8f6f6" stroke="#0c0c84" stroke-width="2"></circle><path d="M62 12.500L66.500 17L62 21.500L57.500 17Z" fill="#e02018"></path>
            <text x="70" y="25" font-family="Liberation Sans" font-weight="bold" font-style="italic" font-size="32" fill="#0c0c84">ntline</text>
          </svg>
          <div class="gen">Genesis 2000<i>Graphic Editor</i></div>
          <div class="date">25 Jun 2024<br />03:42 PM<div class="pause"><b></b><b></b></div></div>
        </div>
      </div>
      <div class="work">
        <div class="left">
          <div class="field">Job : ab48r06ia0</div><div class="field">Step: set</div>
          <div class="jm"><button>Job Matrix ...</button></div>
          <div class="list">
            <div class="names">
              <div class="blk">${this.row("bo", "wh", "#4a9c10")}</div>
              <div class="blk">${this.row("drl", "dk")}${this.row("rout", "lt")}</div>
              <div class="blk">${layers.map((n) => this.row(n, "", n === "bo.d" ? "#f00" : ""))}</div>
            </div>
            <div class="rail"><div class="sb">
              <svg width="12" height="12"><path d="M6 1L11 11H1Z" fill="#54cdb0" stroke="#a5ead8"></path></svg><span style="flex:192"></span><i></i>
              <svg width="12" height="12"><path d="M6 11L11 1H1Z" fill="#54cdb0" stroke="#2f6355"></path></svg></div></div>
          </div>
          <div class="sel">Selected : 0</div>
        </div>
        <pcb-board></pcb-board>
        <div class="side">
          <div class="pads">${Array.from({ length: 40 }, (_, i) => html`<button aria-label="tool ${i + 1}" class=${classMap({ pad: true, g: i > 19 && i < 36, w: i > 15 && i < 20, y: i > 35, r: i > 11 && i < 16 })}><svg width="31" height="31" viewBox="0 0 31 31">${toolPics[i] ?? nothing}</svg></button>`)}</div>
          <div class="void"></div>
          <div class="coord">5"<br />7"</div>
        </div>
      </div>
      <div class="foot"></div>
      <eds-window></eds-window>
      <div class="mark"></div>
      <div class="ime">
        <button class="s" aria-label="输入法"><svg width="32" height="32" viewBox="0 0 32 32"><rect x="3" y="3" width="26" height="26" rx="4" fill="#ee5a24" transform="rotate(-10 16 16)"></rect><path d="M24 9Q9 6 9 12Q9 15 16 16T23 20Q22 25 8 22" fill="none" stroke="#fff" stroke-width="3.500"></path></svg></button>
        <button>中</button>
        <button aria-label="标点">${f("M3 3A2.500 2.500 0 1 1 3 8A2.500 2.500 0 1 1 3 3ZM3 4.500A1 1 0 1 0 3 6.500A1 1 0 1 0 3 4.500ZM10 8H14V11Q14 14 10 15Q12 13 12 12H10Z")}</button>
        <button aria-label="语音">${f("M8 0Q11 0 11 3V7Q11 10 8 10T5 7V3Q5 0 8 0ZM2 6H3.500Q3.500 11.500 8 11.500T12.500 6H14Q14 12 9 13V16H7V13Q2 12 2 6Z")}</button>
        <button aria-label="键盘">${f("M0 2H16V14H0ZM2 4V5.500H4V4ZM5 4V5.500H7V4ZM8 4V5.500H10V4ZM11 4V5.500H14V4ZM2 7V8.500H4V7ZM5 7V8.500H7V7ZM8 7V8.500H10V7ZM11 7V8.500H14V7ZM4 10.500V12H12V10.500Z")}</button>
        <button aria-label="皮肤">${f("M5 1Q8 4 11 1L16 4L14 8L12.500 7.500V15H3.500V7.500L2 8L0 4Z")}</button>
        <button aria-label="游戏">${f("M4 3H12Q16 4 16 12Q15 15 12.500 13L11 11H5L3.500 13Q1 15 0 12Q0 4 4 3ZM4.500 5V6.200H3.300V7.500H4.500V8.700H5.700V7.500H7V6.200H5.700V5ZM10.500 6V8H12.500V6Z")}</button>
        <button aria-label="工具箱">${f("M1 2H7V8H1ZM12 1.500A3 3 0 1 1 12 7.500A3 3 0 1 1 12 1.500ZM1 9.500H7V15H1ZM9 9.500H15V15H9Z")}</button>
        <button aria-label="设置">${f("M8 0L10 3L14 3L13 7L16 9L13 11L12 15H10V11H9V15H7V11H6V15H4L3 11L0 9L3 7L2 3L6 3ZM8 5L6 8L8 10L10 8Z")}</button>
      </div>`;
  }
}
